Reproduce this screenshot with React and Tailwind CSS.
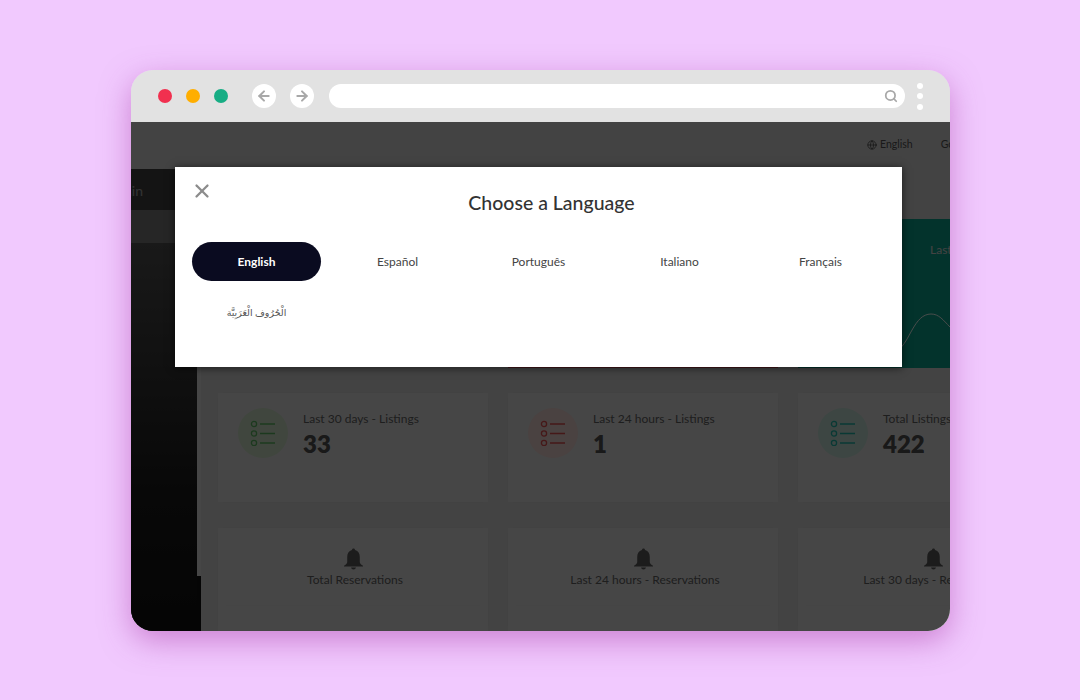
import { ArrowLeft, ArrowRight, Globe, Search, X } from "lucide-react";

const font = { fontFamily: "Lato, 'DejaVu Sans', sans-serif" };

const languages = ["English", "Español", "Português", "Italiano", "Français", "الْحُرُوف الْعَرَبِيَّة"];

function ListIcon({ className }) {
  return (
    <svg viewBox="0 0 26 26" className={className} fill="none" stroke="currentColor" strokeWidth="1.3">
      <circle cx="4" cy="4" r="2.600" />
      <circle cx="4" cy="13.500" r="2.600" />
      <circle cx="4" cy="23" r="2.600" />
      <path d="M10 4h15M10 13.500h15M10 23h15" />
    </svg>
  );
}

function BellIcon() {
  return (
    <svg viewBox="0 0 20 22" className="w-[19px] h-[22px] text-[#5e5e5e]" fill="currentColor">
      <path d="M10 0c1 0 1.600.7 1.700 1.600C15 2.500 16.600 5.300 16.600 9v5c0 1.500.8 2.600 3.400 4.200V19H0v-.8C2.600 16.600 3.400 15.500 3.400 14V9c0-3.700 1.600-6.500 4.900-7.400C8.400.7 9 0 10 0z" />
      <path d="M7.400 20h5.200c-.3 1.200-1.300 2-2.600 2s-2.300-.8-2.600-2z" />
    </svg>
  );
}

function ListingCard({ label, value, iconBg, iconColor }) {
  return (
    <div className="h-[109px] bg-[#ebebeb] shadow-[0_0_8px_rgba(0,0,0,0.04)] flex items-start pl-5 pt-[15px] gap-[15px] whitespace-nowrap overflow-hidden">
      <div className={`w-[50px] h-[50px] rounded-full shrink-0 flex items-center justify-center ${iconBg}`}>
        <ListIcon className={`w-[26px] h-[26px] ${iconColor}`} />
      </div>
      <div className="mt-[3px]">
        <div className="text-[12px] leading-[16px] text-[#666]">{label}</div>
        <div className="text-[24px] leading-[32px] font-extrabold text-[#555] mt-[1px]">{value}</div>
      </div>
    </div>
  );
}

function ReservationCard({ label }) {
  return (
    <div className="h-[103px] bg-[#ebebeb] shadow-[0_0_8px_rgba(0,0,0,0.04)] flex flex-col items-center pt-5 whitespace-nowrap overflow-hidden">
      <BellIcon />
      <div className="text-[12px] leading-[16px] text-[#666] mt-[2px] pl-[4px]">{label}</div>
      <div className="w-[254px] flex-1 mt-[17px] border-t border-[#e6e6e6]" />
    </div>
  );
}

export default function App() {
  return (
    <div className="w-[1080px] h-[700px] bg-[#f1c9fe] pt-[70px] pl-[131px] overflow-hidden" style={font}>
      <div className="w-[819px] h-[561px] rounded-[22px] overflow-hidden flex flex-col shadow-[0_10px_30px_rgba(170,60,170,0.5)]">
        {/* Browser bar */}
        <div className="h-[52px] shrink-0 bg-[#e2e2e2] flex items-center pl-[27px] pr-[27px]">
          <div className="w-[14px] h-[14px] rounded-full bg-[#f1304f]" />
          <div className="w-[14px] h-[14px] rounded-full bg-[#ffae00] ml-[14px]" />
          <div className="w-[14px] h-[14px] rounded-full bg-[#17ad84] ml-[14px]" />
          <div className="w-[24px] h-[24px] rounded-full bg-white ml-[24px] flex items-center justify-center">
            <ArrowLeft className="w-[16px] h-[16px] text-[#a8a8a8]" strokeWidth={3} />
          </div>
          <div className="w-[24px] h-[24px] rounded-full bg-white ml-[14px] flex items-center justify-center">
            <ArrowRight className="w-[16px] h-[16px] text-[#a8a8a8]" strokeWidth={3} />
          </div>
          <div className="w-[576px] h-[24px] rounded-full bg-white ml-[15px] flex items-center justify-end pr-[7px]">
            <Search className="w-[14px] h-[14px] text-[#a8a8a8]" strokeWidth={3} />
          </div>
          <div className="flex flex-col gap-[4.500px] ml-[12px]">
            <div className="w-[6px] h-[6px] rounded-full bg-white" />
            <div className="w-[6px] h-[6px] rounded-full bg-white" />
            <div className="w-[6px] h-[6px] rounded-full bg-white" />
          </div>
        </div>

        {/* Page behind the dialog */}
        <div className="relative flex-1 flex flex-col overflow-hidden bg-[#e2e2e2]">
          <div className="h-[44px] shrink-0 bg-[#e2e2e2] flex items-center pl-[736px] pt-[1px] whitespace-nowrap overflow-hidden text-[10.500px] text-[#555]">
            <Globe className="w-[10px] h-[10px] mr-[3px] shrink-0" />
            <span>English</span>
            <span className="ml-[28px]">Go</span>
          </div>

          <div className="flex-1 flex min-h-0">
            <div className="w-[70px] shrink-0 flex bg-[#111]">
              <div className="w-[66px] shrink-0 flex flex-col overflow-hidden bg-[linear-gradient(#666,#1c1c1c_70%,#111)]">
                <div className="h-[3px] bg-[#e2e2e2]" />
                <div className="h-[41px] bg-[#454545] flex justify-end pr-[54px] pt-[12px] whitespace-nowrap text-[14px] leading-[20px] text-[#aaa]">Admin</div>
                <div className="h-[33px] bg-[#7f7f7f]" />
              </div>
              <div className="w-[4px] h-[410px] bg-[#ececec]" />
            </div>
            <div className="flex-1 min-w-0 pl-[17px] overflow-hidden">
              <div className="w-[800px] pt-[53px]">
                <div className="grid grid-cols-[270px_270px_270px] gap-x-[20px]">
                  <div className="h-[149px] bg-[#ebebeb]" />
                  <div className="h-[149px] bg-[#e0505f]" />
                  <div className="h-[149px] bg-[#0cab94] relative pt-[22px] pl-[132px] text-[12px] text-[#e0e0e0]">
                    Last
                    <svg viewBox="0 0 152 60" className="absolute left-0 bottom-0 w-[152px] h-[60px]" fill="none" stroke="#f2fffb" strokeWidth="1">
                      <path d="M100 42c12-8 16-36 33-36 8 0 12 6 19 13" />
                    </svg>
                  </div>
                </div>
                <div className="grid grid-cols-[270px_270px_270px] gap-x-[20px] mt-[25px]">
                  <ListingCard label="Last 30 days - Listings" value="33" iconBg="bg-[#d6ecd0]" iconColor="text-[#5fc066]" />
                  <ListingCard label="Last 24 hours - Listings" value="1" iconBg="bg-[#f7dcd9]" iconColor="text-[#e85050]" />
                  <ListingCard label="Total Listings" value="422" iconBg="bg-[#cde9e0]" iconColor="text-[#1fbfb0]" />
                </div>
                <div className="grid grid-cols-[270px_270px_270px] gap-x-[20px] mt-[26px]">
                  <ReservationCard label="Total Reservations" />
                  <ReservationCard label="Last 24 hours - Reservations" />
                  <ReservationCard label="Last 30 days - Reservations" />
                </div>
              </div>
            </div>
          </div>

          <div className="absolute inset-0 bg-black/70" />

          {/* Language dialog */}
          <div className="absolute left-[44px] top-[45px] w-[727px] h-[200px] bg-white shadow-[0_1px_8px_rgba(0,0,0,0.6)] px-[11px]">
            <button className="absolute left-[16px] top-[13px] text-[#8c8c8c]">
              <X className="w-[22px] h-[22px]" strokeWidth={2.500} />
            </button>
            <h2 className="text-[19.500px] leading-[26px] font-medium text-[#333] text-center mt-[23px] pl-[26px]">Choose a Language</h2>
            <div className="grid grid-cols-5 w-[705px] mt-[26px]">
              {languages.map((lang, i) => (
                <div key={lang} className="h-[51px] px-[6px]">
                  <button
                    className={`w-full h-[39px] rounded-full ${
                      i === 0
                        ? "bg-[#0a0b20] text-white font-bold text-[12px]"
                        : i === 5
                          ? "text-[#555] text-[9.500px] pt-[2px]"
                          : "text-[#444] text-[12px]"
                    }`}
                  >
                    {lang}
                  </button>
                </div>
              ))}
            </div>
          </div>
        </div>
      </div>
    </div>
  );
}
